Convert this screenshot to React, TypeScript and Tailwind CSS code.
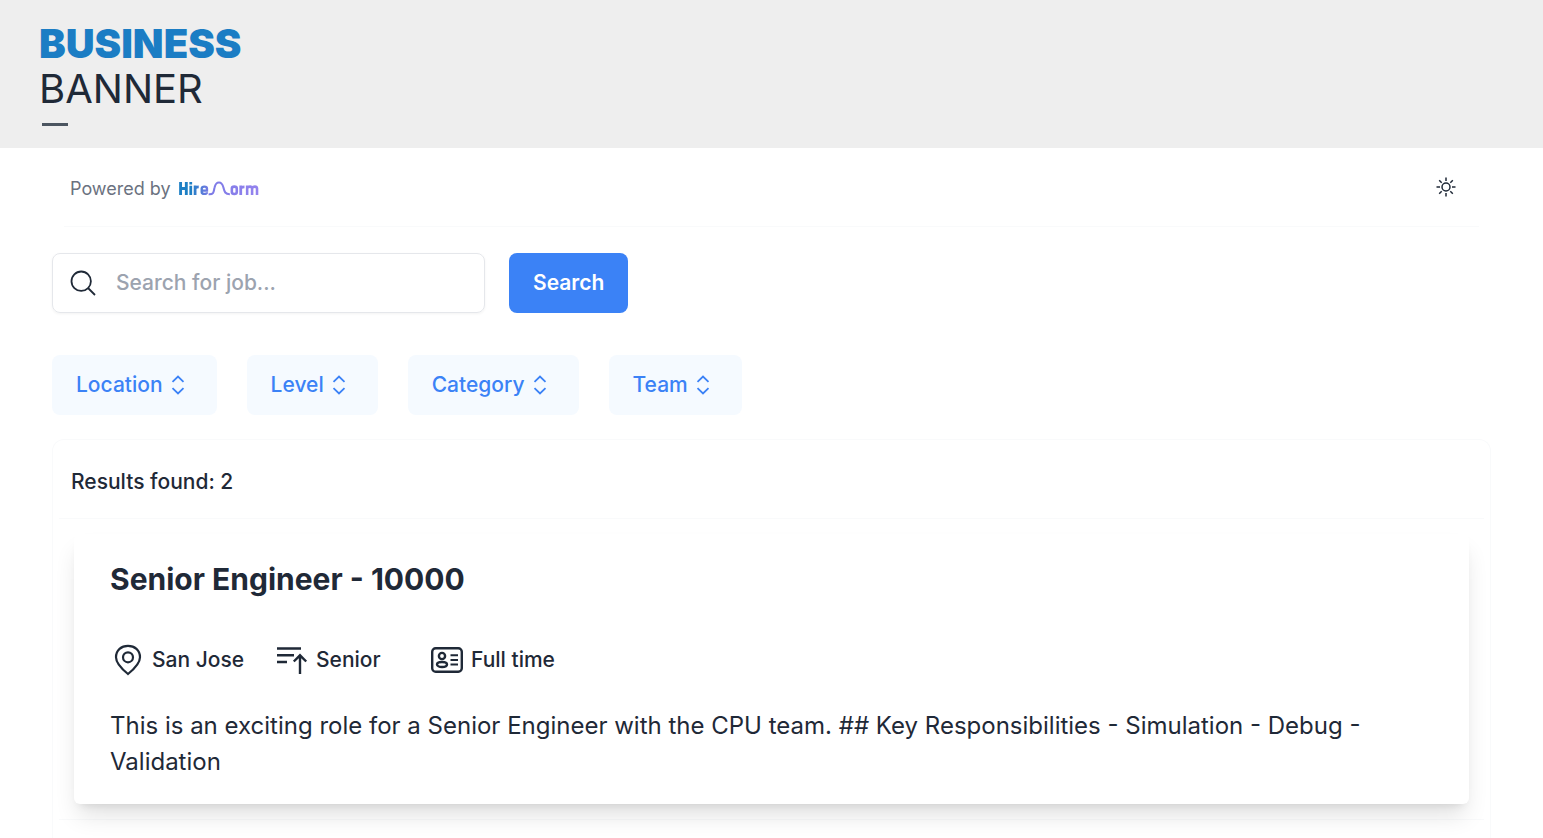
import React, { useState } from "react";

type Job = {
  id: string;
  title: string;
  location: string;
  level: string;
  jobType: string;
  description: string;
};

const jobs: Job[] = [
  {
    id: "10000",
    title: "Senior Engineer - 10000",
    location: "San Jose",
    level: "Senior",
    jobType: "Full time",
    description:
      "This is an exciting role for a Senior Engineer with the CPU team. ## Key Responsibilities - Simulation - Debug - Validation",
  },
];

const filters = ["Location", "Level", "Category", "Team"];

function HireNormLogo() {
  return (
    <svg width="80" height="20" viewBox="0 0 81 20" role="img" aria-label="HireNorm">
      <defs>
        <linearGradient id="logo" gradientUnits="userSpaceOnUse" x1="0" y1="0" x2="81" y2="0">
          <stop offset="0.15" stopColor="#1d7fc4" />
          <stop offset="0.38" stopColor="#7c7ae6" />
          <stop offset="1" stopColor="#9483ee" />
        </linearGradient>
      </defs>
      <g fill="none" stroke="url(#logo)" strokeWidth="2.6">
        <path d="M1.6 3V16M7.4 3V16M1.6 9.5H7.4" strokeWidth="2.9" />
        <path d="M11.9 6.8V16M11.9 3V5.4" strokeWidth="2.8" />
        <path d="M16.3 6.5V16M16.3 10Q16.3 7.8 20 7.8" strokeWidth="2.8" />
        <path d="M23 11.6H28.3V9.5Q28.3 7.6 25.7 7.6T23 9.5V13Q23 15 25.7 15T28.3 13.3" strokeWidth="2.4" />
        <path d="M30 15.3C36 15.8 35 12 36 8.5C37 4.5 38 3.5 40.5 3.5S44 5 45 8.5C46 12.5 46.5 15.3 51.5 15.3" strokeWidth="2.1" />
        <path d="M53.5 9.5Q53.5 7.6 56 7.6T58.5 9.5V13Q58.5 15 56 15T53.5 13Z" />
        <path d="M62.5 6.5V16M62.5 10Q62.5 7.8 66.3 7.8" strokeWidth="2.8" />
        <path d="M69 6.5V16M69 9Q70 7.6 71.9 7.6T74 9.5V16M74 9Q75 7.6 76.9 7.6T79 9.5V16" />
      </g>
    </svg>
  );
}

function SunIcon() {
  return (
    <svg width="20" height="20" viewBox="0 0 20 20" fill="none" stroke="currentColor" strokeWidth="1.5">
      <circle cx="10" cy="10" r="4" />
      <path d="M10 .5V4M10 16v3.5M.5 10H4M16 10h3.5M3.2 3.2l2.5 2.5M14.3 14.3l2.5 2.5M3.2 16.8l2.5-2.5M14.3 5.7l2.5-2.5" />
    </svg>
  );
}

function SearchIcon() {
  return (
    <svg width="26" height="26" viewBox="0 0 26 26" fill="none" stroke="currentColor" strokeWidth="1.8">
      <circle cx="11.2" cy="11.2" r="9.7" />
      <path d="M18 18l7 7" />
    </svg>
  );
}

function ChevronsIcon() {
  return (
    <svg width="14" height="20" viewBox="0 0 14 20" fill="none" stroke="currentColor" strokeWidth="1.8">
      <path d="M1.5 6.8L7 1.5l5.5 5.3M1.5 13.2L7 18.5l5.5-5.3" />
    </svg>
  );
}

function PinIcon() {
  return (
    <svg width="32" height="32" viewBox="0 0 32 32" fill="none" stroke="currentColor" strokeWidth="2.2">
      <path d="M16 30C11 26 4 20 4 13.3 4 6 9.4 1.800 16 1.8S28 6 28 13.3C28 20 21 26 16 30Z" />
      <circle cx="16" cy="13.3" r="5" />
    </svg>
  );
}

function LevelIcon() {
  return (
    <svg width="32" height="32" viewBox="0 0 32 32" fill="none" stroke="currentColor" strokeWidth="2.4">
      <path d="M1 4.5h24M1 11.2h17M1 18h10M24 30V12M17.8 17.5L24 11.3l6.2 6.2" />
    </svg>
  );
}

function IdCardIcon() {
  return (
    <svg width="32" height="32" viewBox="0 0 32 32" fill="none" stroke="currentColor" strokeWidth="2.4">
      <rect x="1.2" y="4.2" width="29.6" height="23.6" rx="3.5" />
      <circle cx="11" cy="12" r="3.1" />
      <ellipse cx="11" cy="20.5" rx="5" ry="2.5" />
      <path d="M19.5 11.2h7.5M19.5 16h7.5M19.5 20.5h7.5" strokeWidth="2" />
    </svg>
  );
}

function JobCard({ job }: { job: Job }) {
  return (
    <article className="rounded-md bg-white px-9 pt-6 pb-6 shadow-[0_15px_23px_-4px_rgb(0_0_0/0.12),0_6px_9px_-6px_rgb(0_0_0/0.12)]">
      <h2 className="text-[30px] leading-[42px] font-bold">{job.title}</h2>
      <div className="mt-11 flex items-center text-[21px] leading-8 font-medium">
        <div className="flex min-w-[166px] items-center gap-2 pl-0.5">
          <PinIcon />
          <span>{job.location}</span>
        </div>
        <div className="flex min-w-[155px] items-center gap-2">
          <LevelIcon />
          <span>{job.level}</span>
        </div>
        <div className="flex items-center gap-2">
          <IdCardIcon />
          <span>{job.jobType}</span>
        </div>
      </div>
      <p className="mt-8 text-2xl leading-9">{job.description}</p>
    </article>
  );
}

export default function App() {
  const [query, setQuery] = useState("");

  return (
    <div className="flex min-h-screen flex-col bg-white font-['Inter',sans-serif] text-[#1f2937]">
      <header className="h-[148px] bg-[#eeeeee] px-[39px] pt-[21px]">
        <div className="text-[40px] leading-[45px] font-black text-[#1b7dc4]">BUSINESS</div>
        <div className="text-[40px] leading-[45px] font-normal">BANNER</div>
        <div className="mt-3 ml-[3px] h-[3px] w-[26px] bg-[#4b5560]" />
      </header>

      <main className="flex flex-1 flex-col px-[52px]">
        <nav className="mx-3 flex h-[79px] items-center justify-between border-b border-[#f9fafb] pr-[23px] pl-1.5">
          <div className="flex items-center gap-2 pt-1 text-lg text-[#6b7280]">
            <span>Powered by</span>
            <a href="#">
              <HireNormLogo />
            </a>
          </div>
          <button type="button" aria-label="Toggle theme">
            <SunIcon />
          </button>
        </nav>

        {/* Search */}
        <form className="mt-[26px] flex gap-6" onSubmit={(e) => e.preventDefault()}>
          <label className="flex h-[60px] w-[433px] items-center gap-5 rounded-lg border border-[#e5e7eb] px-[17px] shadow-[0_1px_3px_rgb(0_0_0/0.05)]">
            <SearchIcon />
            <input
              type="text"
              aria-label="Search for job"
              className="min-w-0 flex-1 text-[21px] font-medium outline-none placeholder:text-[#9ca3af]"
              placeholder="Search for job..."
              value={query}
              onChange={(e) => setQuery(e.target.value)}
            />
          </label>
          <button type="submit" className="h-[60px] rounded-lg bg-[#3b82f6] px-6 text-[21px] font-semibold text-white">
            Search
          </button>
        </form>

        {/* Filters */}
        <div className="mt-[42px] flex gap-[30px]">
          {filters.map((name) => (
            <button
              key={name}
              type="button"
              className="flex h-[60px] items-center gap-2 rounded-lg bg-[#f5faff] pr-8 pl-6 text-[21px] font-medium text-[#3b82f6]"
            >
              {name}
              <ChevronsIcon />
            </button>
          ))}
        </div>

        {/* Results */}
        <section className="mt-6 flex-1 rounded-t-xl border border-b-0 border-[#f9fafb] px-1.5">
          <div className="flex h-[79px] items-center border-b border-[#f9fafb] px-3 pt-1.5 text-[21px] font-medium">
            Results found: 2
          </div>
          {jobs.map((job) => (
            <div key={job.id} className="border-b border-[#f9fafb] px-[15px] py-[15px]">
              <JobCard job={job} />
            </div>
          ))}
        </section>
      </main>
    </div>
  );
}
